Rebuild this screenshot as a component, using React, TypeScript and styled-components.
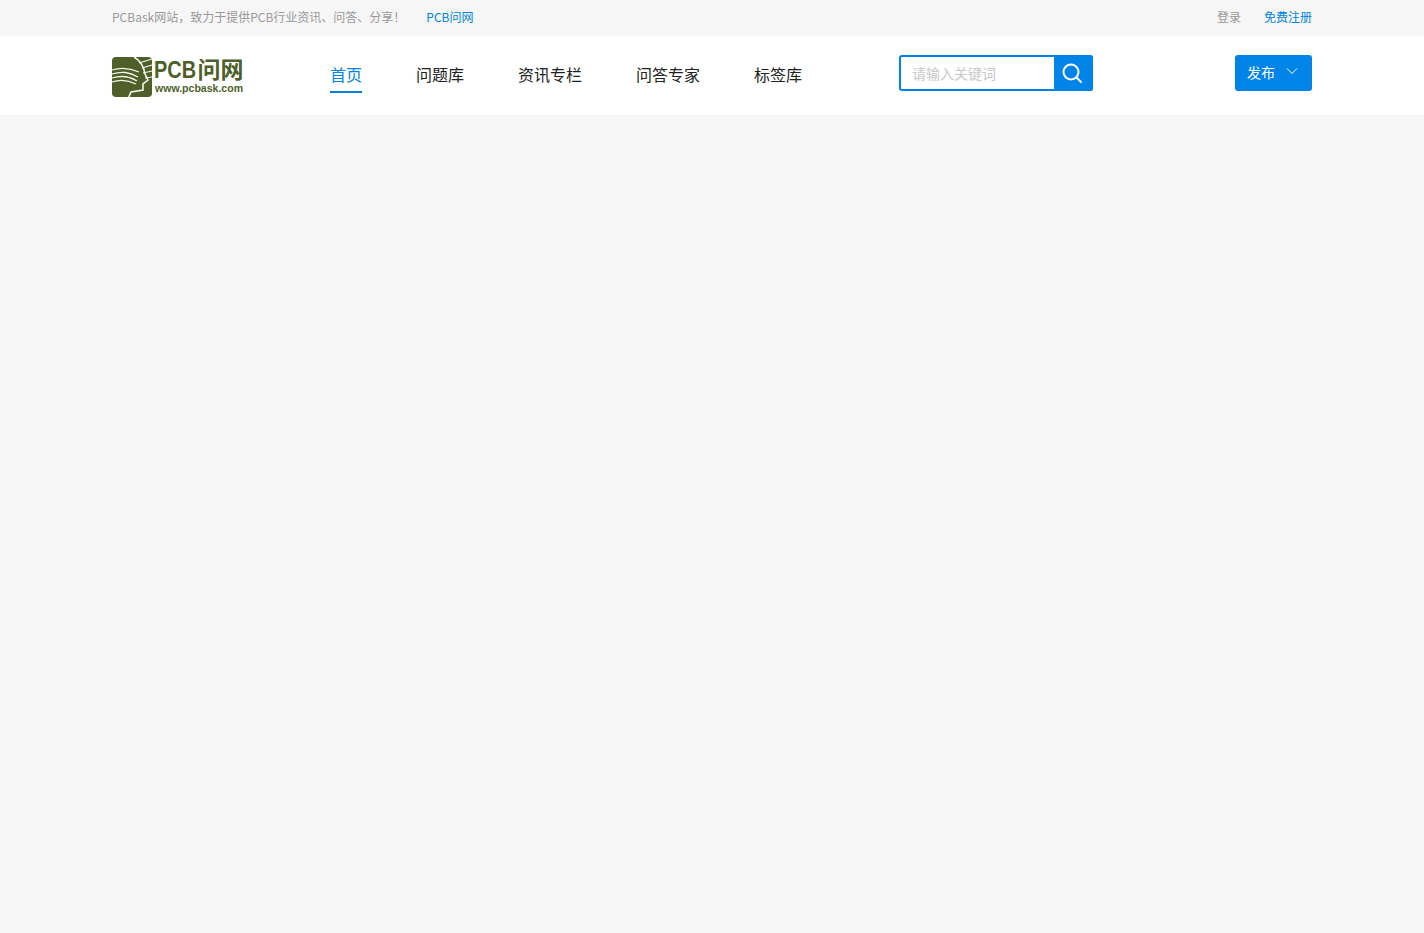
import React from "react";
import styled, { createGlobalStyle } from "styled-components";

const Global = createGlobalStyle`
  html, body { margin: 0; padding: 0; min-height: 100%; background: #f6f6f6; }
  body { font-family: "Noto Sans CJK SC", "Liberation Sans", sans-serif; font-weight: 400; }
  #root { min-height: 933px; background: #f6f6f6; }
`;
const Wrap = styled.div`
  width: 1200px; margin: 0 auto; display: flex; align-items: center;
`;
const TopBar = styled.div`height: 36px; background: #f6f6f6; font-size: 12px; color: #999;`;
const TopInner = styled(Wrap)`height: 36px; justify-content: space-between; padding-bottom: 4px; box-sizing: border-box;`;
const TopGroup = styled.div`display: flex; align-items: center;`;
const Slogan = styled.span`color: #999;`;
const TopLink = styled.a<{ $gap: number; $blue?: boolean }>`
  margin-left: ${p => p.$gap}px; color: ${p => (p.$blue ? "#0084d9" : "#999")};
`;
const Header = styled.div`height: 79px; background: #fff;`;
const HeaderInner = styled(Wrap)`height: 79px;`;
const LogoBox = styled.svg`width: 132px; height: 44px; flex: none; margin-top: 2px; display: block; overflow: visible;`;
const Nav = styled.nav`display: flex; gap: 54px; margin-left: 86px; width: 569px; height: 79px; align-items: flex-start;`;
const NavItem = styled.a<{ $active?: boolean }>`
  display: block; margin-top: 28px; height: 29px; line-height: 21px; font-size: 16px;
  color: ${p => (p.$active ? "#0084d9" : "#222")};
  border-bottom: 2px solid ${p => (p.$active ? "#0084d9" : "transparent")};
  box-sizing: border-box;
`;
const Search = styled.div`
  display: flex; width: 194px; height: 36px; margin-top: -6px; box-sizing: border-box;
  border: 2px solid #0084e8; border-radius: 3px; background: #fff;
`;
const SearchInput = styled.input`
  flex: 1; min-width: 0; border: 0; outline: 0; padding: 0 11px; background: transparent;
  font: 400 14px "Noto Sans CJK SC", sans-serif; color: #333;
  &::placeholder { color: #c8c8c8; opacity: 1; }
`;
const SearchButton = styled.button`
  flex: none; border: 0; padding: 0 3px 0 0; margin: -2px -2px -2px 0; height: 36px; width: 39px;
  background: #0084e8; border-radius: 0 3px 3px 0; display: flex; align-items: center; justify-content: center;
`;
const Publish = styled.button`
  margin: -6px 0 0 auto; width: 77px; height: 36px; border: 0; border-radius: 3px; background: #0084e8;
  color: #fff; font: 400 14px "Noto Sans CJK SC", sans-serif; display: flex; align-items: center;
  padding: 0 0 1px 12px; gap: 11px;
`;
const Chevron = styled.svg`margin-top: -2px;`;

const navs = ["首页", "问题库", "资讯专栏", "问答专家", "标签库"];
const OLIVE = "#4e5f29";

const Logo = () => (
  <LogoBox viewBox="0 0 132 44">
    <rect x="0" y="2" width="40" height="40" rx="4" fill={OLIVE} />
    <path d="M0 15C10 12 18 13 27 17M0 19C10 16 17 17 26 22M0 23C10 20 17 21 25 26M0 27C9 24 16 25 24 29" fill="none" stroke="#f4f6ea" strokeWidth="1.3" />
    <path d="M22 2C29 6 32 12 33 19L36 25 31 29V35L19 37 16 44" fill="none" stroke="#f4f6ea" strokeWidth="1.6" />
    <path d="M27 8L40 4M30 13L40 10M31 18L40 16M33 23L40 22" stroke="#f4f6ea" strokeWidth="1.2" />
    <text transform="translate(42 23) scale(0.83 1)" fontFamily="'Liberation Sans', sans-serif" fontWeight="700" fontSize="24" fill={OLIVE}>PCB</text>
    <text x="85.5" y="23" fontFamily="'Noto Sans CJK SC', sans-serif" fontWeight="700" fontSize="23" fill={OLIVE}>问网</text>
    <text x="43" y="37" fontFamily="'Liberation Sans', sans-serif" fontWeight="700" fontSize="10" fill={OLIVE} textLength="88" lengthAdjust="spacingAndGlyphs">www.pcbask.com</text>
  </LogoBox>
);

export default function App() {
  return (
    <>
      <Global />
      <TopBar>
        <TopInner>
          <TopGroup>
            <Slogan>PCBask网站，致力于提供PCB行业资讯、问答、分享！</Slogan>
            <TopLink $gap={21} $blue>PCB问网</TopLink>
          </TopGroup>
          <TopGroup>
            <TopLink $gap={0}>登录</TopLink>
            <TopLink $gap={23} $blue>免费注册</TopLink>
          </TopGroup>
        </TopInner>
      </TopBar>
      <Header>
        <HeaderInner>
          <Logo />
          <Nav>
            {navs.map((n, i) => (
              <NavItem key={n} $active={i === 0}>{n}</NavItem>
            ))}
          </Nav>
          <Search>
            <SearchInput placeholder="请输入关键词" />
            <SearchButton aria-label="搜索">
              <svg width="22" height="22" viewBox="0 0 22 22" fill="none" stroke="#fff" strokeWidth="2" strokeLinecap="round">
                <circle cx="10" cy="10" r="7.5" />
                <path d="M15.5 15.5L20 20" />
              </svg>
            </SearchButton>
          </Search>
          <Publish>
            发布
            <Chevron width="12" height="8" viewBox="0 0 12 8" fill="none" stroke="#fff" strokeWidth="1">
              <path d="M1 1.5L6 6.5L11 1.5" />
            </Chevron>
          </Publish>
        </HeaderInner>
      </Header>
    </>
  );
}
